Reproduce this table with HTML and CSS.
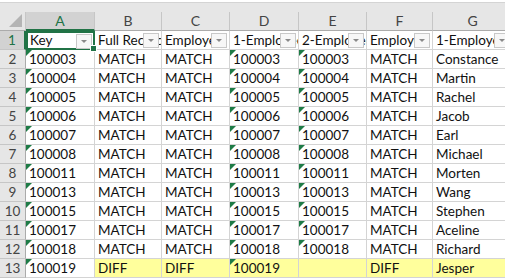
FILE: index.html
```html
<!DOCTYPE html>
<html>
<head>
<meta charset="utf-8">
<link rel="stylesheet" href="styles.css">
</head>
<body>
<div class="sheet">
  <div class="topbar"></div>
  <div class="gap"></div>
  <div class="grid">
    <div class="corner"><span class="tri"></span></div>
    <div class="ch sel">A</div><div class="ch">B</div><div class="ch">C</div><div class="ch">D</div><div class="ch">E</div><div class="ch">F</div><div class="ch">G</div>

    <div class="rh sel">1</div>
    <div class="c hd active"><span class="t">Key</span><span class="fb"></span><span class="handle"></span></div>
    <div class="c hd"><span class="t">Full Record</span><span class="fb"></span></div>
    <div class="c hd"><span class="t">Employee</span><span class="fb"></span></div>
    <div class="c hd"><span class="t">1-Employee</span><span class="fb"></span></div>
    <div class="c hd"><span class="t">2-Employee</span><span class="fb"></span></div>
    <div class="c hd"><span class="t">Employee</span><span class="fb"></span></div>
    <div class="c hd"><span class="t">1-Employee</span><span class="fb"></span></div>

    <div class="rh">2</div><div class="c g">100003</div><div class="c">MATCH</div><div class="c">MATCH</div><div class="c g">100003</div><div class="c g">100003</div><div class="c">MATCH</div><div class="c">Constance</div>
    <div class="rh">3</div><div class="c g">100004</div><div class="c">MATCH</div><div class="c">MATCH</div><div class="c g">100004</div><div class="c g">100004</div><div class="c">MATCH</div><div class="c">Martin</div>
    <div class="rh">4</div><div class="c g">100005</div><div class="c">MATCH</div><div class="c">MATCH</div><div class="c g">100005</div><div class="c g">100005</div><div class="c">MATCH</div><div class="c">Rachel</div>
    <div class="rh">5</div><div class="c g">100006</div><div class="c">MATCH</div><div class="c">MATCH</div><div class="c g">100006</div><div class="c g">100006</div><div class="c">MATCH</div><div class="c">Jacob</div>
    <div class="rh">6</div><div class="c g">100007</div><div class="c">MATCH</div><div class="c">MATCH</div><div class="c g">100007</div><div class="c g">100007</div><div class="c">MATCH</div><div class="c">Earl</div>
    <div class="rh">7</div><div class="c g">100008</div><div class="c">MATCH</div><div class="c">MATCH</div><div class="c g">100008</div><div class="c g">100008</div><div class="c">MATCH</div><div class="c">Michael</div>
    <div class="rh">8</div><div class="c g">100011</div><div class="c">MATCH</div><div class="c">MATCH</div><div class="c g">100011</div><div class="c g">100011</div><div class="c">MATCH</div><div class="c">Morten</div>
    <div class="rh">9</div><div class="c g">100013</div><div class="c">MATCH</div><div class="c">MATCH</div><div class="c g">100013</div><div class="c g">100013</div><div class="c">MATCH</div><div class="c">Wang</div>
    <div class="rh">10</div><div class="c g">100015</div><div class="c">MATCH</div><div class="c">MATCH</div><div class="c g">100015</div><div class="c g">100015</div><div class="c">MATCH</div><div class="c">Stephen</div>
    <div class="rh">11</div><div class="c g">100017</div><div class="c">MATCH</div><div class="c">MATCH</div><div class="c g">100017</div><div class="c g">100017</div><div class="c">MATCH</div><div class="c">Aceline</div>
    <div class="rh">12</div><div class="c g">100018</div><div class="c">MATCH</div><div class="c">MATCH</div><div class="c g">100018</div><div class="c g">100018</div><div class="c">MATCH</div><div class="c">Richard</div>
    <div class="rh">13</div><div class="c g">100019</div><div class="c y">DIFF</div><div class="c y">DIFF</div><div class="c y g">100019</div><div class="c y"></div><div class="c y">DIFF</div><div class="c y">Jesper</div>
    <div class="rh">14</div><div class="c g"></div><div class="c"></div><div class="c"></div><div class="c g"></div><div class="c g"></div><div class="c"></div><div class="c"></div>
  </div>
</div>
</body>
</html>
```
FILE: styles.css
```css
html, body {
  margin: 0;
  padding: 0;
  background: #ffffff;
}
.sheet {
  width: 505px;
  height: 278px;
  overflow: hidden;
  font-family: "Lato", "Liberation Sans", sans-serif;
  font-size: 13.5px;
  color: #111;
}
.topbar {
  height: 2px;
  background: #ffffff;
  border-bottom: 1px solid #d4d4d4;
}
.gap {
  height: 9px;
  background: #e6e6e6;
}
.grid {
  display: grid;
  grid-template-columns: 26px 69px 67px 68px 69px 68px 66px 80px;
  grid-template-rows: 19px repeat(14, 19px);
}
.corner {
  background: #e6e6e6;
  border-right: 1px solid #c6c6c6;
  border-bottom: 1px solid #ababab;
  position: relative;
}
.corner .tri {
  position: absolute;
  right: 3px;
  bottom: 3px;
  width: 0;
  height: 0;
  border-left: 13px solid transparent;
  border-bottom: 13px solid #b4b4b4;
}
.ch {
  background: #e6e6e6;
  border-right: 1px solid #c6c6c6;
  border-bottom: 1px solid #ababab;
  color: #444;
  text-align: center;
  line-height: 18px;
  font-size: 14px;
}
.ch.sel {
  background: #d2d2d2;
  color: #217346;
  border-bottom: 2px solid #217346;
}
.rh {
  background: #e6e6e6;
  border-right: 1px solid #ababab;
  border-bottom: 1px solid #c6c6c6;
  color: #444;
  text-align: center;
  line-height: 19px;
}
.rh.sel {
  background: #d2d2d2;
  color: #217346;
  border-right: 2px solid #217346;
}
.c {
  position: relative;
  border-right: 1px solid #d4d4d4;
  border-bottom: 1px solid #d4d4d4;
  padding-left: 3px;
  line-height: 19px;
  white-space: nowrap;
  overflow: hidden;
  box-sizing: border-box;
}
.c.y {
  background: #ffff9c;
}
.c.g::before {
  content: "";
  position: absolute;
  left: 0;
  top: 0;
  width: 0;
  height: 0;
  border-top: 6px solid #1e7b46;
  border-right: 6px solid transparent;
}
.hd .t {
  display: block;
  overflow: hidden;
}
.hd .fb {
  position: absolute;
  right: 2px;
  top: 2px;
  width: 14px;
  height: 13px;
  background: #f7f7f7;
  border: 1px solid #c8c8c8;
}
.hd .fb::after {
  content: "";
  position: absolute;
  left: 4px;
  top: 5px;
  border-left: 3px solid transparent;
  border-right: 3px solid transparent;
  border-top: 3px solid #8a8a8a;
}
.active {
  border: 2px solid #217346;
  padding-left: 2px;
  line-height: 15px;
  overflow: visible;
}
.active .t {
  overflow: hidden;
}
.active .fb {
  top: 1px;
  right: 1px;
}
.handle {
  position: absolute;
  right: -4px;
  bottom: -4px;
  width: 5px;
  height: 5px;
  background: #217346;
  border: 1px solid #fff;
  z-index: 2;
}
```
